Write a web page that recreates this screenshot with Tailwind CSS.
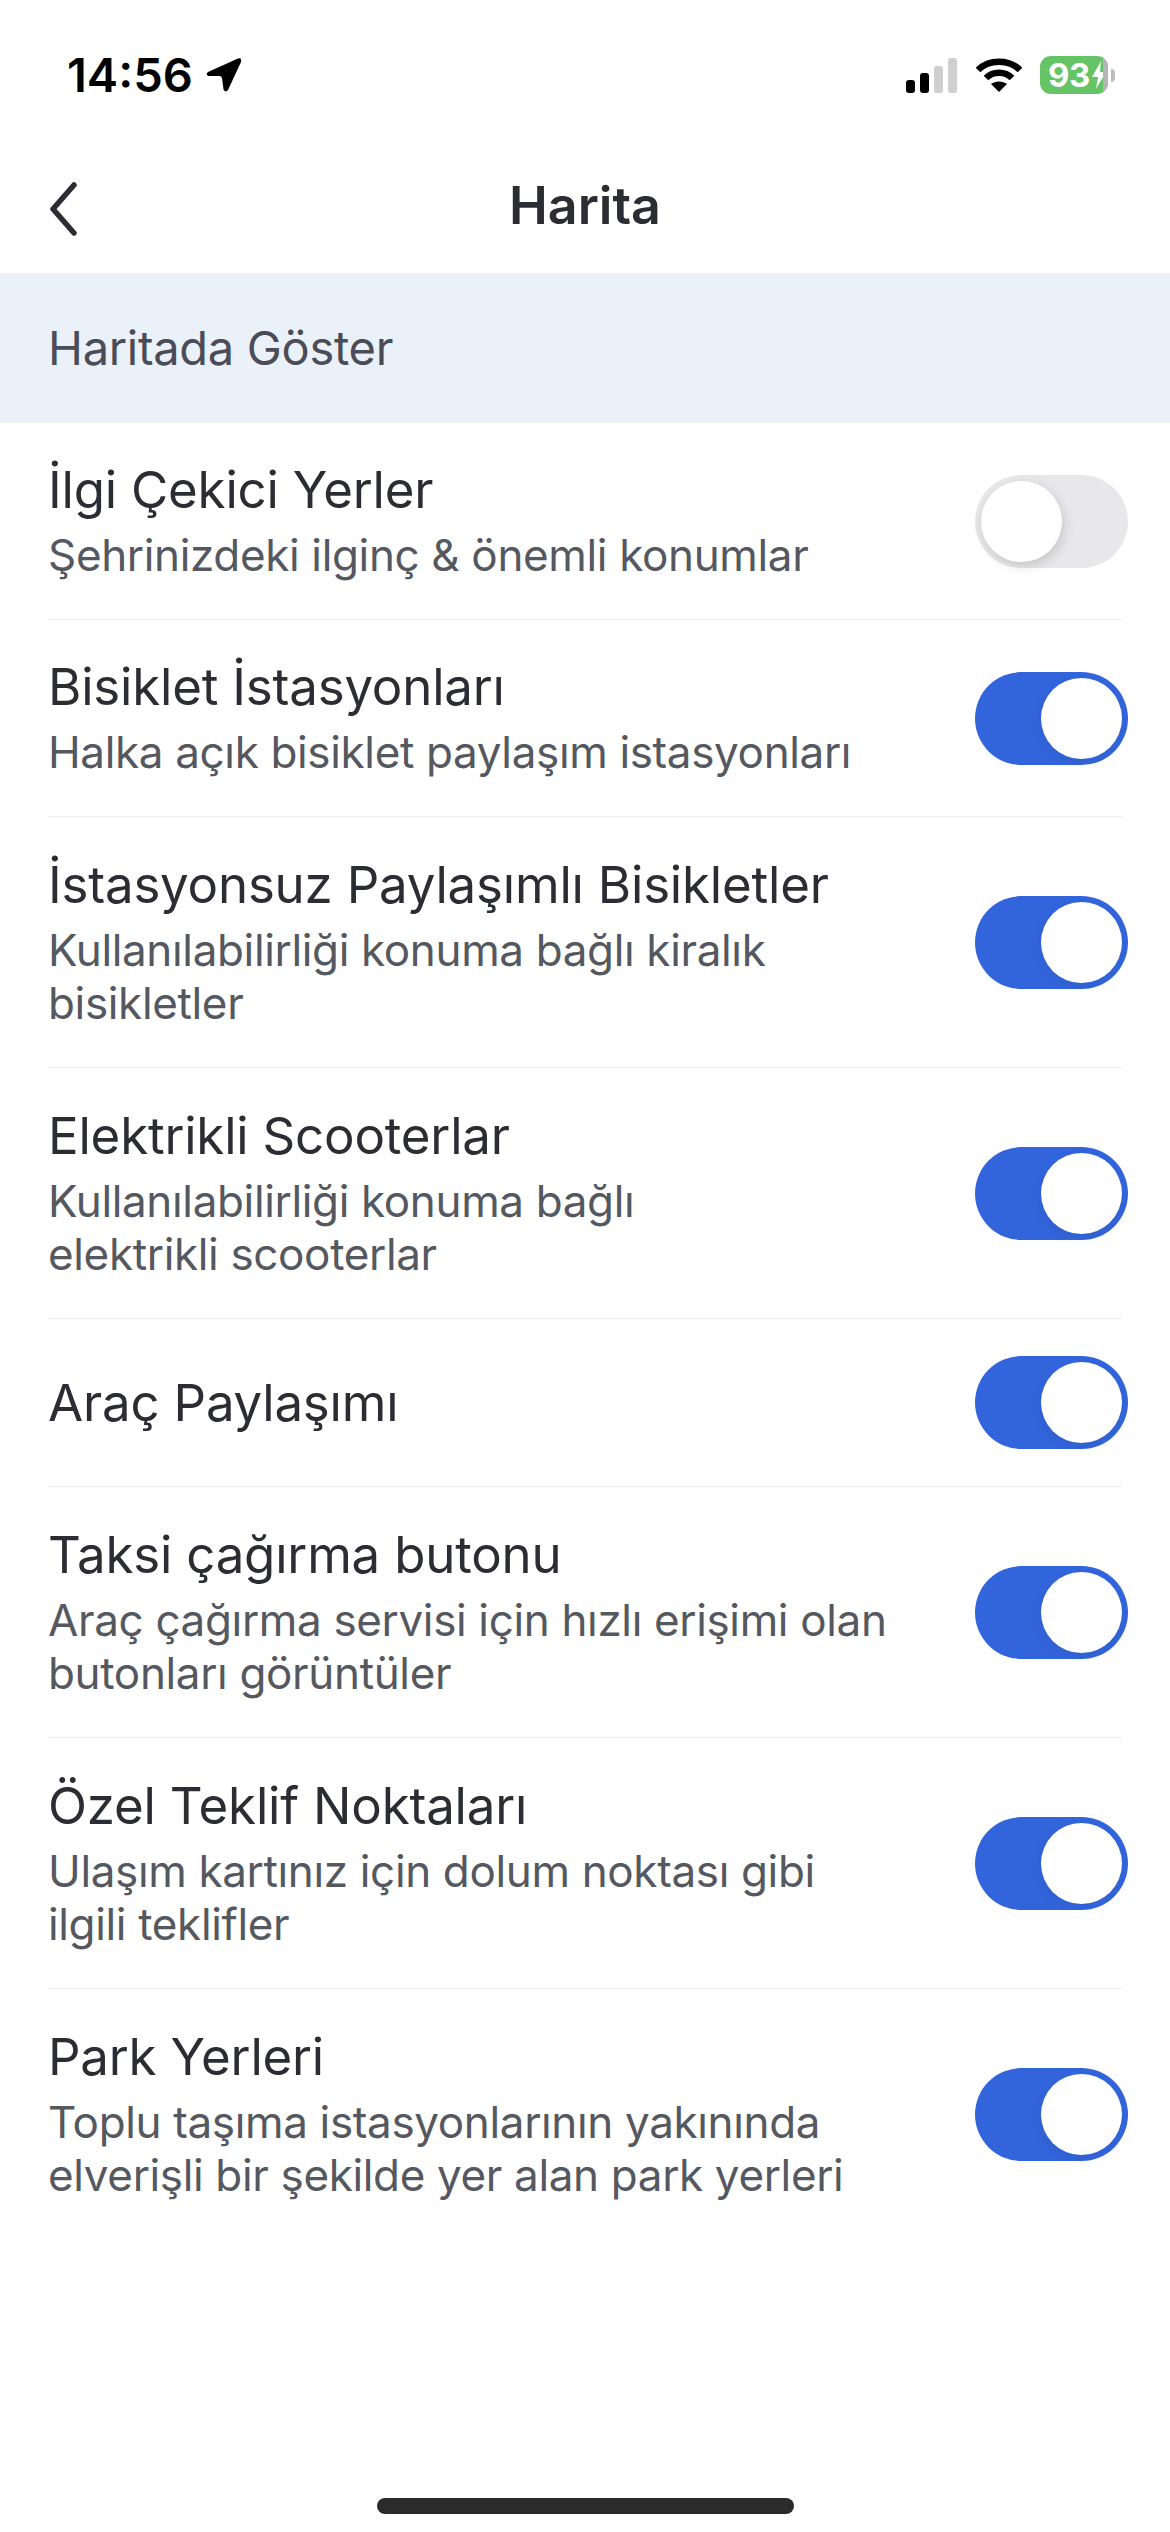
<!doctype html>
<html>
  <head>
    <meta charset="utf-8" />
    <meta name="viewport" content="width=device-width, initial-scale=1.0" />
    <script src="https://cdn.jsdelivr.net/npm/@tailwindcss/browser@4"></script>
    <title>Harita</title>
  </head>
  <body class="bg-white font-['Inter',sans-serif]">
    <div class="w-[1170px] h-[2532px] flex flex-col overflow-hidden relative">
      <!-- Status bar -->
      <div class="h-[150px] flex items-start justify-between pt-[51px] pl-[67px] pr-[55px]">
        <div class="flex items-center gap-[12px] h-[48px]">
          <span class="text-[47px] leading-[48px] font-semibold text-black">14:56</span>
          <svg width="38" height="36" viewBox="0 0 38 36"><path d="M3 15 L33 1.500 Q37 0.500 36 5 L23 33 Q20.500 36 18.500 32.500 L17 21 Q16.500 19 14.500 19 L3.500 19 Q0 17.500 3 15 Z" fill="#000"/></svg>
        </div>
        <div class="flex items-center h-[48px]">
          <svg width="52" height="35" viewBox="0 0 52 35" class="mr-[17px]">
            <rect x="0" y="22" width="9" height="13" rx="3" fill="#000"/>
            <rect x="14" y="15" width="9" height="20" rx="3" fill="#000"/>
            <rect x="28" y="8" width="9" height="27" rx="3" fill="#cfcfcf"/>
            <rect x="42" y="0" width="9" height="35" rx="3" fill="#cfcfcf"/>
          </svg>
          <svg width="48" height="35" viewBox="0 0 48 35" class="mr-[17px]" fill="none" stroke="#000" stroke-width="6.500">
            <path d="M3 12 C14 1 34 1 45 12"/>
            <path d="M11 20 C18 13 30 13 37 20"/>
            <path d="M24 34 L16 26 C20 22.500 28 22.500 32 26 Z" fill="#000" stroke="none"/>
          </svg>
          <div class="w-[68px] h-[38px] rounded-[11px] bg-[#65c466] overflow-hidden flex">
            <div class="w-[63px] flex items-center pl-[8px] gap-[1px]">
              <span class="text-[33px] leading-[38px] font-bold text-white tracking-[-0.5px]">93</span>
              <svg width="16" height="30" viewBox="0 0 16 30" class="shrink-0"><path d="M10 1 L1 17 L7 17 L5 29 L15 12 L9 12 Z" fill="#fff"/></svg>
            </div>
            <div class="w-[5px] bg-[#b5b5b5]"></div>
          </div>
          <div class="w-[4px] h-[13px] rounded-r-full bg-[#bdbdbd] ml-[3px]"></div>
        </div>
      </div>

      <!-- Nav bar -->
      <div class="h-[123px] relative flex items-center justify-center pb-[12px]">
        <svg width="30" height="54" viewBox="0 0 30 54" class="absolute left-[49px] top-[32px]" fill="none" stroke="#2c2d33" stroke-width="5.500" stroke-linecap="round" stroke-linejoin="round"><path d="M25 3 L4 27 L25 51"/></svg>
        <span class="text-[52px] leading-[60px] font-semibold text-[#2c2d33]">Harita</span>
      </div>

      <!-- Section header -->
      <div class="h-[150px] bg-[#eaf1f9] flex items-center px-[48px]">
        <span class="text-[47px] leading-[60px] text-[#4a4d57] tracking-[-0.3px]">Haritada Göster</span>
      </div>

      <!-- Rows -->
      <div class="flex flex-col">
        <div class="h-[196px] flex items-center justify-between pl-[48px] pr-[42px]">
          <div class="w-[860px]">
            <div class="text-[51px] leading-[60px] text-[#2c2d33] tracking-[-0.2px]">İlgi Çekici Yerler</div>
            <div class="text-[44px] leading-[53px] text-[#55585f] tracking-[-0.35px] mt-[9px]">Şehrinizdeki ilginç &amp; önemli konumlar</div>
          </div>
          <div class="w-[153px] h-[93px] rounded-full bg-[#e8e8ea] p-[6px] flex justify-start shrink-0"><div class="w-[81px] h-[81px] rounded-full bg-white shadow-[2px_4px_12px_rgba(0,0,0,0.15)]"></div></div>
        </div>
        <div class="h-px bg-[#eeeeee] mx-[48px]"></div>

        <div class="h-[196px] flex items-center justify-between pl-[48px] pr-[42px]">
          <div class="w-[860px]">
            <div class="text-[51px] leading-[60px] text-[#2c2d33] tracking-[-0.2px]">Bisiklet İstasyonları</div>
            <div class="text-[44px] leading-[53px] text-[#55585f] tracking-[-0.35px] mt-[9px]">Halka açık bisiklet paylaşım istasyonları</div>
          </div>
          <div class="w-[153px] h-[93px] rounded-full bg-[#3265dc] p-[6px] flex justify-end shrink-0"><div class="w-[81px] h-[81px] rounded-full bg-white shadow-[-2px_4px_12px_rgba(0,0,0,0.06)]"></div></div>
        </div>
        <div class="h-px bg-[#eeeeee] mx-[48px]"></div>

        <div class="h-[250px] flex items-center justify-between pl-[48px] pr-[42px]">
          <div class="w-[860px]">
            <div class="text-[51px] leading-[60px] text-[#2c2d33] tracking-[-0.2px]">İstasyonsuz Paylaşımlı Bisikletler</div>
            <div class="text-[44px] leading-[53px] text-[#55585f] tracking-[-0.35px] mt-[9px]">Kullanılabilirliği konuma bağlı kiralık<br />bisikletler</div>
          </div>
          <div class="w-[153px] h-[93px] rounded-full bg-[#3265dc] p-[6px] flex justify-end shrink-0"><div class="w-[81px] h-[81px] rounded-full bg-white shadow-[-2px_4px_12px_rgba(0,0,0,0.06)]"></div></div>
        </div>
        <div class="h-px bg-[#eeeeee] mx-[48px]"></div>

        <div class="h-[250px] flex items-center justify-between pl-[48px] pr-[42px]">
          <div class="w-[860px]">
            <div class="text-[51px] leading-[60px] text-[#2c2d33] tracking-[-0.2px]">Elektrikli Scooterlar</div>
            <div class="text-[44px] leading-[53px] text-[#55585f] tracking-[-0.35px] mt-[9px]">Kullanılabilirliği konuma bağlı<br />elektrikli scooterlar</div>
          </div>
          <div class="w-[153px] h-[93px] rounded-full bg-[#3265dc] p-[6px] flex justify-end shrink-0"><div class="w-[81px] h-[81px] rounded-full bg-white shadow-[-2px_4px_12px_rgba(0,0,0,0.06)]"></div></div>
        </div>
        <div class="h-px bg-[#eeeeee] mx-[48px]"></div>

        <div class="h-[167px] flex items-center justify-between pl-[48px] pr-[42px]">
          <div class="w-[860px]">
            <div class="text-[51px] leading-[60px] text-[#2c2d33] tracking-[-0.2px]">Araç Paylaşımı</div>
          </div>
          <div class="w-[153px] h-[93px] rounded-full bg-[#3265dc] p-[6px] flex justify-end shrink-0"><div class="w-[81px] h-[81px] rounded-full bg-white shadow-[-2px_4px_12px_rgba(0,0,0,0.06)]"></div></div>
        </div>
        <div class="h-px bg-[#eeeeee] mx-[48px]"></div>

        <div class="h-[250px] flex items-center justify-between pl-[48px] pr-[42px]">
          <div class="w-[860px]">
            <div class="text-[51px] leading-[60px] text-[#2c2d33] tracking-[-0.2px]">Taksi çağırma butonu</div>
            <div class="text-[44px] leading-[53px] text-[#55585f] tracking-[-0.35px] mt-[9px]">Araç çağırma servisi için hızlı erişimi olan<br />butonları görüntüler</div>
          </div>
          <div class="w-[153px] h-[93px] rounded-full bg-[#3265dc] p-[6px] flex justify-end shrink-0"><div class="w-[81px] h-[81px] rounded-full bg-white shadow-[-2px_4px_12px_rgba(0,0,0,0.06)]"></div></div>
        </div>
        <div class="h-px bg-[#eeeeee] mx-[48px]"></div>

        <div class="h-[250px] flex items-center justify-between pl-[48px] pr-[42px]">
          <div class="w-[860px]">
            <div class="text-[51px] leading-[60px] text-[#2c2d33] tracking-[-0.2px]">Özel Teklif Noktaları</div>
            <div class="text-[44px] leading-[53px] text-[#55585f] tracking-[-0.35px] mt-[9px]">Ulaşım kartınız için dolum noktası gibi<br />ilgili teklifler</div>
          </div>
          <div class="w-[153px] h-[93px] rounded-full bg-[#3265dc] p-[6px] flex justify-end shrink-0"><div class="w-[81px] h-[81px] rounded-full bg-white shadow-[-2px_4px_12px_rgba(0,0,0,0.06)]"></div></div>
        </div>
        <div class="h-px bg-[#eeeeee] mx-[48px]"></div>

        <div class="h-[250px] flex items-center justify-between pl-[48px] pr-[42px]">
          <div class="w-[860px]">
            <div class="text-[51px] leading-[60px] text-[#2c2d33] tracking-[-0.2px]">Park Yerleri</div>
            <div class="text-[44px] leading-[53px] text-[#55585f] tracking-[-0.35px] mt-[9px]">Toplu taşıma istasyonlarının yakınında<br />elverişli bir şekilde yer alan park yerleri</div>
          </div>
          <div class="w-[153px] h-[93px] rounded-full bg-[#3265dc] p-[6px] flex justify-end shrink-0"><div class="w-[81px] h-[81px] rounded-full bg-white shadow-[-2px_4px_12px_rgba(0,0,0,0.06)]"></div></div>
        </div>
      </div>

      <!-- Home indicator -->
      <div class="absolute bottom-[18px] left-[377px] w-[417px] h-[16px] rounded-full bg-[#2b2b2b]"></div>
    </div>
  </body>
</html>
